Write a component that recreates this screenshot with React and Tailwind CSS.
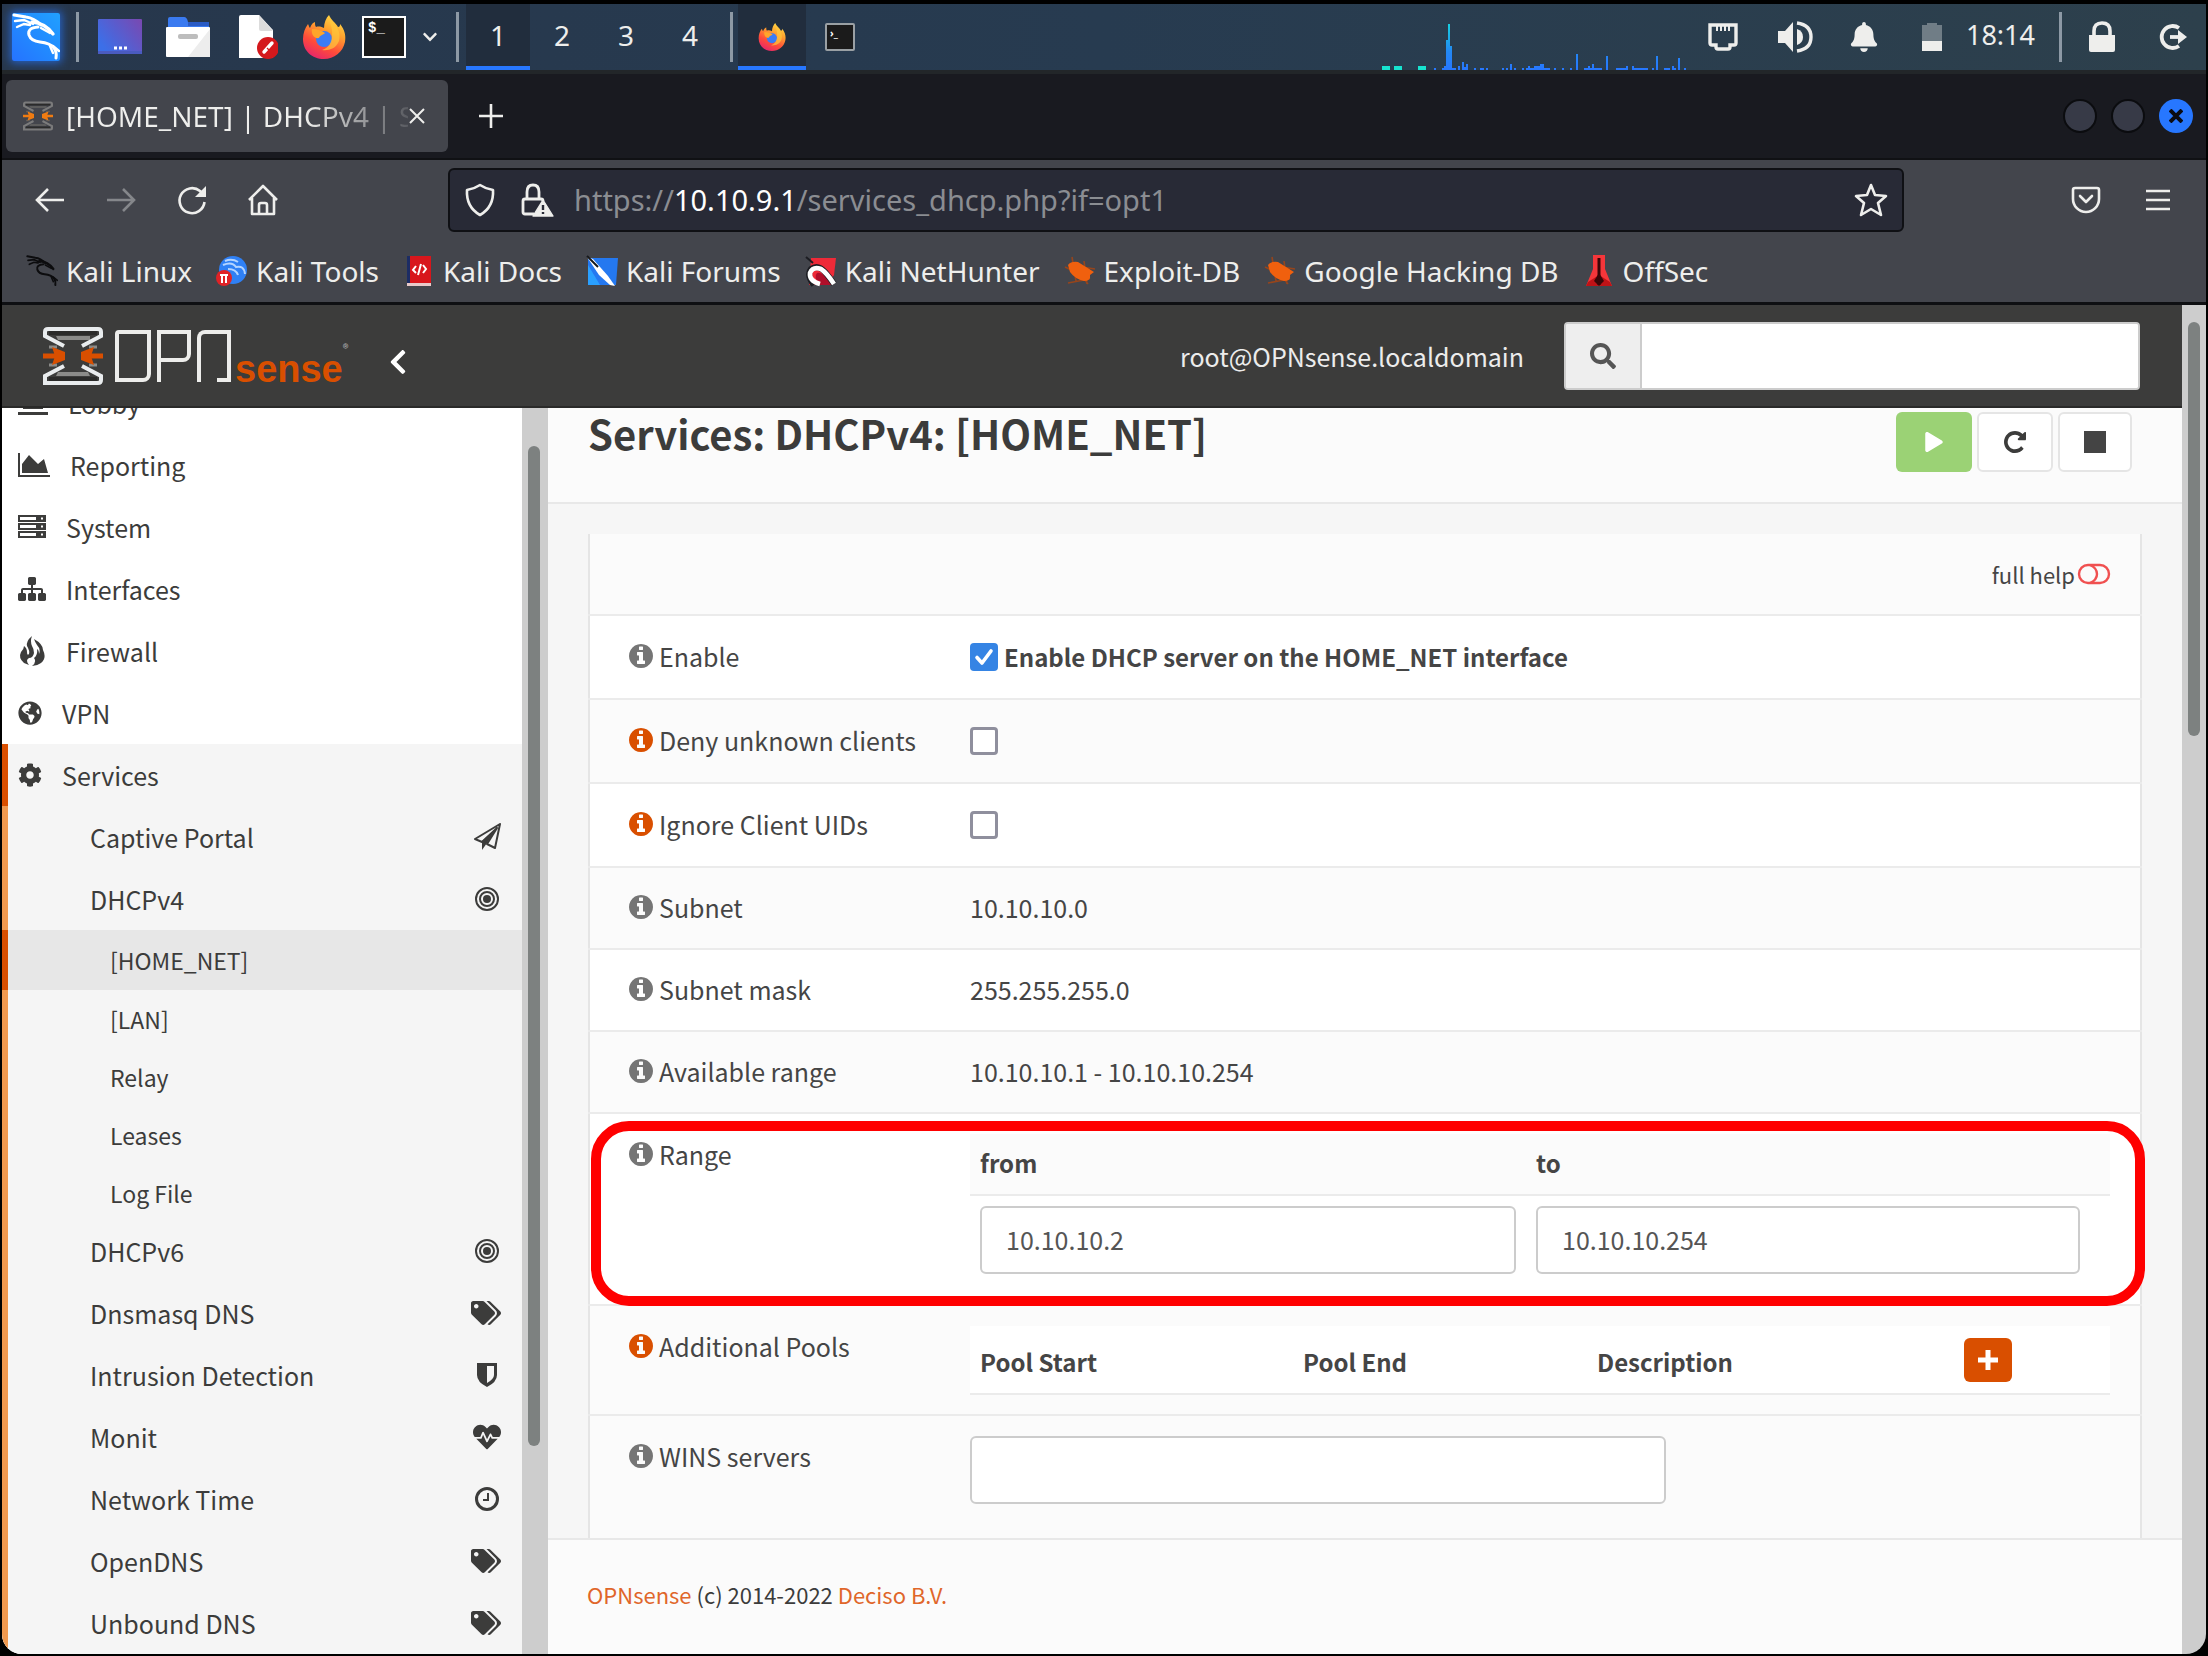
import React from "react";
import {
  FaSearch,
  FaTags,
  FaHeartbeat,
  FaCog,
  FaGlobeAmericas,
  FaPlay,
  FaChevronLeft,
  FaChevronDown,
  FaBell,
} from "react-icons/fa";

/* ---------- desktop icons ---------- */

function KaliDragon({ className, color }) {
  return (
    <svg viewBox="0 0 48 48" className={className} fill="none" stroke={color} strokeLinecap="round">
      <path d="M2 2L14 4Q22 5 29 12" strokeWidth="3" />
      <path d="M3 8L12 7L21 11M5 14L12 11L18 12" strokeWidth="2.4" />
      <path d="M20 9Q33 10 41 21" strokeWidth="3.4" />
      <path d="M29 15L38 20" strokeWidth="2.4" />
      <path d="M26 14Q15 15 17 22Q19 28 28 29Q38 30 42 35Q45 39 44 45" strokeWidth="3" />
      <path d="M38 33L41 40M41 33L47 38" strokeWidth="2.4" />
    </svg>
  );
}

function FirefoxIcon({ className, id }) {
  return (
    <svg viewBox="0 0 44 44" className={className}>
      <defs>
        <linearGradient id={id} x1="0.8" y1="0" x2="0.3" y2="1">
          <stop offset="0" stopColor="#ffe14a" />
          <stop offset="0.35" stopColor="#ffa22e" />
          <stop offset="0.7" stopColor="#ff4b3a" />
          <stop offset="1" stopColor="#e6266b" />
        </linearGradient>
      </defs>
      <path
        d="M27 0C29 5 34 8 36 12C38 12 38 10 38 9C43 15 44 21 43 27C41 37 32 44 22 44C10 44 1 36 1 24C1 18 3 13 6 9C7 11 7 12 8 13C9 9 12 7 13 7C13 9 13 11 14 12C17 11 20 12 22 13C22 8 24 3 27 0Z"
        fill={`url(#${id})`}
      />
      <circle cx="22" cy="24" r="8" fill="#3b7cf5" />
      <path d="M10 14C16 14 20 16 23 18C21 20 18 20 17 23C12 24 9 19 10 14Z" fill="#ffa52a" />
      <path d="M30 20C31 12 27 8 27 2C31 8 40 14 37 26C34 34 26 36 20 35C27 33 30 27 30 20Z" fill="#ffc83c" opacity="0.7" />
    </svg>
  );
}

function DesktopIcon() {
  return (
    <svg viewBox="0 0 44 36" className="h-9 w-11">
      <defs>
        <linearGradient id="desk" x1="0" y1="0.6" x2="1" y2="0">
          <stop offset="0" stopColor="#3c6fe8" />
          <stop offset="1" stopColor="#7a48b0" />
        </linearGradient>
      </defs>
      <rect width="44" height="35" rx="1" fill="url(#desk)" />
      <rect y="32" width="44" height="3" fill="#4a5bc0" />
      <path d="M16 29h3M21 29h3M26 29h3" stroke="#fff" strokeWidth="3" />
    </svg>
  );
}

function FolderIcon() {
  return (
    <svg viewBox="0 0 44 42" className="h-[42px] w-11">
      <path d="M2 3Q2 1 4 1H18Q21 1 22 6H43V16H2Z" fill="#3a7af0" />
      <path d="M22 6H43V10H22Z" fill="#2a5bc4" />
      <rect y="11" width="44" height="30" rx="1" fill="#fff" />
      <path d="M44 13V41H22Z" fill="#ededed" />
      <rect x="12" y="18" width="20" height="5" rx="2" fill="#bdbdbd" />
    </svg>
  );
}

function DocumentIcon() {
  return (
    <svg viewBox="0 0 44 46" className="h-[46px] w-11">
      <path d="M5 3Q5 1 7 1H25L39 16V44H5Z" fill="#fff" />
      <path d="M25 1L39 17H27Q25 17 25 15Z" fill="#dcdcdc" />
      <circle cx="34" cy="34" r="11" fill="#d4181c" />
      <path d="M30 38L38 29" stroke="#fff" strokeWidth="3.4" strokeLinecap="round" />
      <path d="M33 34L35 36" stroke="#d4181c" strokeWidth="1.2" />
    </svg>
  );
}

function Separator({ className }) {
  return <span className={`h-[50px] w-[3px] bg-[#8d99a5] ${className}`} />;
}

const LOAD_BARS = [
  [54, 2], [62, 2], [64, 4], [66, 30], [68, 46], [70, 24], [72, 2], [74, 2], [78, 4], [82, 8], [84, 3], [86, 6],
  [94, 2], [100, 2], [102, 2], [106, 2], [122, 2], [126, 2], [130, 6], [134, 2], [142, 2], [146, 2], [148, 4],
  [150, 2], [152, 2], [154, 4], [156, 4], [158, 4], [160, 6], [162, 6], [164, 2], [166, 2], [168, 2], [174, 2],
  [182, 2], [190, 2], [196, 16], [204, 2], [206, 2], [208, 4], [210, 2], [212, 6], [214, 2], [216, 2], [218, 2],
  [220, 2], [226, 14], [236, 2], [238, 2], [240, 2], [242, 2], [244, 2], [246, 4], [252, 4], [254, 2], [256, 2],
  [258, 2], [260, 2], [262, 2], [264, 2], [266, 2], [272, 2], [276, 14], [284, 2], [286, 2], [288, 2], [292, 4],
  [294, 2], [298, 12], [304, 2],
];

function LoadGraph() {
  return (
    <svg viewBox="0 0 308 66" className="h-[66px] w-[308px]">
      <defs>
        <linearGradient id="load" x1="0" y1="20" x2="0" y2="66" gradientUnits="userSpaceOnUse">
          <stop offset="0" stopColor="#16d0e0" />
          <stop offset="0.6" stopColor="#2388f4" />
          <stop offset="1" stopColor="#2777ff" />
        </linearGradient>
      </defs>
      <path d="M2 64h8M14 64h8M38 64h8" stroke="#17e3d0" strokeWidth="4" />
      {LOAD_BARS.map(([x, h]) => (
        <rect key={x} x={x} y={66 - h} width="2" height={h} fill="url(#load)" />
      ))}
    </svg>
  );
}

function Taskbar() {
  return (
    <header className="flex h-[66px] shrink-0 items-center bg-linear-to-r from-[#27374c] via-[#273b50] to-[#2d404c] pr-[18px] pl-[10px] text-[28px] text-[#eeeeec]">
      <button aria-label="Applications" className="h-12 w-12 rounded-xs bg-linear-to-tr from-[#2673ff] to-[#21a0ff] shadow-[0_0_8px_2px_#2777ffaa]">
        <KaliDragon className="h-12 w-12" color="#fff" />
      </button>
      <Separator className="ml-4" />
      <div className="ml-[19px] flex items-center gap-6">
        <button aria-label="Show desktop"><DesktopIcon /></button>
        <button aria-label="Files"><FolderIcon /></button>
        <button aria-label="Text editor"><DocumentIcon /></button>
        <button aria-label="Firefox"><FirefoxIcon className="h-11 w-11" id="ffa" /></button>
      </div>
      <button aria-label="Terminal" className="ml-4 flex h-[42px] w-11 items-start border-2 border-white bg-[#1b1b1b] pl-1 font-['Liberation_Mono'] text-sm font-bold text-white">
        $_
      </button>
      <button aria-label="More launchers" className="ml-4"><FaChevronDown className="h-4 w-4" /></button>
      <Separator className="ml-[18px]" />
      <nav className="ml-[7px] flex h-full">
        <button className="w-16 border-b-4 border-[#2777ff] bg-[#212d3d]">1</button>
        <button className="w-16 pb-1">2</button>
        <button className="w-16 pb-1">3</button>
        <button className="w-16 pb-1">4</button>
      </nav>
      <Separator className="ml-2" />
      <button aria-label="Firefox window" className="ml-[5px] flex h-full w-[68px] items-center justify-center border-b-4 border-[#2777ff] bg-[#212d3d] pt-1">
        <FirefoxIcon className="h-7 w-7" id="ffb" />
      </button>
      <button aria-label="Terminal window" className="flex h-full w-[68px] items-center justify-center">
        <span className="flex h-7 w-[30px] items-start rounded-xs border-2 border-[#9aa0a4] bg-[#1b1b1b] pl-[3px] text-[10px] leading-4 font-bold text-white">›_</span>
      </button>
      <div className="ml-auto flex items-center">
        <LoadGraph />
        <svg viewBox="0 0 30 28" className="ml-5 h-7 w-[30px]" fill="none" stroke="#eeeeec" strokeWidth="3.4">
          <path d="M2 2H28V20Q28 22 26 22H22V24Q22 26 20 26H10Q8 26 8 24V22H4Q2 22 2 20Z" />
          <path d="M9 3V8M13 3V8M17 3V8M21 3V8" strokeWidth="2" />
        </svg>
        <svg viewBox="0 0 36 32" className="ml-10 h-8 w-9" fill="#eeeeec">
          <path d="M0 10H7L15 1V31L7 22H0Z" />
          <path d="M19 8Q25 10 25 16T19 24Z" />
          <path d="M19 2Q33 4 33 16T19 30" fill="none" stroke="#eeeeec" strokeWidth="3.4" />
        </svg>
        <FaBell className="ml-9 h-[30px] w-7" />
        <svg viewBox="0 0 20 28" className="ml-11 h-7 w-5">
          <path d="M0 2H5V0H15V2H20V28H0Z" fill="#707d86" />
          <path d="M0 18H20V28H0Z" fill="#eeeeec" />
        </svg>
        <time className="ml-6 pb-1 text-[27px]">18:14</time>
        <Separator className="ml-6" />
        <svg viewBox="0 0 28 32" className="ml-[26px] h-8 w-7" fill="#eeeeec">
          <path d="M1 14H27V29Q27 31 25 31H3Q1 31 1 29Z" />
          <path d="M6 15V10Q6 2 14 2T22 10V15" fill="none" stroke="#eeeeec" strokeWidth="3.6" />
        </svg>
        <svg viewBox="0 0 30 28" className="ml-[42px] h-7 w-[30px]" fill="none" stroke="#eeeeec" strokeWidth="3.8">
          <path d="M21 5A11 11 0 1 0 21 23" />
          <path d="M12 14H22" />
          <path d="M20 7L29 14L20 21Z" fill="#eeeeec" stroke="none" />
        </svg>
      </div>
    </header>
  );
}

/* ---------- browser chrome ---------- */

function HourglassMark({ className, line, inner, accent }) {
  return (
    <svg viewBox="0 0 60 60" className={className} fill="none">
      <path d="M6 5H54V9H6ZM6 51H54V55H6Z" fill="#2b2b2a" />
      <path d="M13 10H47V14H15ZM15 46H45L47 50H13Z" fill={inner} />
      <path d="M6 21H14M46 21H54M6 39H14M46 39H54" stroke={inner} strokeWidth="3" />
      <path d="M21 20L2 10V6Q2 3 5 3H55Q58 3 58 6V10L39 20" stroke={line} strokeWidth="4" />
      <path d="M21 40L2 50V57H55Q58 57 58 54V50L39 40" stroke={line} strokeWidth="4" />
      <path d="M0 30H14M60 30H46" stroke={accent} strokeWidth="5" />
      <path d="M9 21L22 26V34L9 39L12 30ZM51 21L38 26V34L51 39L48 30Z" fill={accent} />
    </svg>
  );
}

function TabStrip() {
  return (
    <div className="flex h-[90px] shrink-0 items-center border-t-4 border-b-2 border-t-[#222629] border-b-[#101114] bg-[#191a20] pr-[13px] pl-1 text-[#eeeeec]">
      <div className="flex h-[72px] w-[442px] items-center rounded-md bg-[#43454c] pl-[17px]">
        <HourglassMark className="h-8 w-[30px]" line="#7b7b7b" inner="#5c5c5c" accent="#f07c12" />
        <span className="ml-[13px] w-[342px] overflow-hidden bg-linear-to-r from-[#eeeeec] from-70% to-[#eeeeec22] bg-clip-text text-[28px] whitespace-nowrap text-transparent">
          [HOME_NET] | DHCPv4 | S
        </span>
        <button aria-label="Close tab">
          <svg viewBox="0 0 18 18" className="h-[18px] w-[18px]" stroke="#eeeeec" strokeWidth="2">
            <path d="M2 2L16 16M16 2L2 16" />
          </svg>
        </button>
      </div>
      <button aria-label="New tab" className="ml-[30px]">
        <svg viewBox="0 0 26 26" className="h-[26px] w-[26px]" stroke="#eeeeec" strokeWidth="2.6">
          <path d="M13 1V25M1 13H25" />
        </svg>
      </button>
      <div className="ml-auto flex gap-[14px]">
        <button aria-label="Minimize" className="h-[34px] w-[34px] rounded-full border-2 border-[#0b0c0f] bg-[#373a47]" />
        <button aria-label="Maximize" className="h-[34px] w-[34px] rounded-full border-2 border-[#0b0c0f] bg-[#373a47]" />
        <button aria-label="Close" className="flex h-[34px] w-[34px] items-center justify-center rounded-full bg-[#2777ff]">
          <svg viewBox="0 0 14 14" className="h-[14px] w-[14px]" stroke="#0b0c14" strokeWidth="4">
            <path d="M1 1L13 13M13 1L1 13" />
          </svg>
        </button>
      </div>
    </div>
  );
}

function NavBar() {
  return (
    <div className="flex h-20 shrink-0 items-center bg-[#43454c] pr-[35px] pl-8 text-[#eeeeec]">
      <div className="flex items-center gap-[39px]">
        <button aria-label="Back">
          <svg viewBox="0 0 32 32" className="h-8 w-8" fill="none" stroke="#eeeeec" strokeWidth="2.6">
            <path d="M30 16H3M14 5L3 16L14 27" />
          </svg>
        </button>
        <button aria-label="Forward">
          <svg viewBox="0 0 32 32" className="h-8 w-8" fill="none" stroke="#85878b" strokeWidth="2.6">
            <path d="M2 16H29M18 5L29 16L18 27" />
          </svg>
        </button>
        <button aria-label="Reload">
          <svg viewBox="0 0 32 32" className="h-8 w-8" fill="none" stroke="#eeeeec" strokeWidth="2.6">
            <path d="M28.500 18A12.500 12.500 0 1 1 24 7L28 11" />
            <path d="M30 2V13H19Z" fill="#eeeeec" stroke="none" />
          </svg>
        </button>
        <button aria-label="Home">
          <svg viewBox="0 0 32 32" className="h-8 w-8" fill="none" stroke="#eeeeec" strokeWidth="2.6" strokeLinejoin="round">
            <path d="M2 16L16 2L30 16M5 14V30H27V14M12 30V21Q12 19 14 19H18Q20 19 20 21V30" />
          </svg>
        </button>
      </div>
      <div className="mr-auto ml-[169px] flex h-16 max-w-[1456px] min-w-0 flex-1 items-center rounded-md border-2 border-[#0f1014] bg-[#282a36] px-[14px]">
        <svg viewBox="0 0 32 34" className="h-[34px] w-8" fill="none" stroke="#eeeeec" strokeWidth="2.6" strokeLinejoin="round">
          <path d="M16 2Q22 6 29 7Q30 24 16 32Q2 24 3 7Q10 6 16 2Z" />
        </svg>
        <svg viewBox="0 0 34 34" className="ml-6 h-[34px] w-[34px]" fill="none" stroke="#eeeeec" strokeWidth="2.8">
          <path d="M14 31H5Q3 31 3 29V18Q3 16 5 16H21Q23 16 23 18M7 16V9Q7 2 13 2T19 9V16" />
          <path d="M23 17L33 33H13Z" fill="#eeeeec" stroke="#eeeeec" strokeWidth="1.4" strokeLinejoin="round" />
          <path d="M23 22V27M23 29V31" stroke="#282a36" strokeWidth="2.4" />
        </svg>
        <p className="ml-5 text-[29px] whitespace-nowrap text-[#8b8d92]">
          https://<span className="text-white">10.10.9.1</span>/services_dhcp.php?if=opt1
        </p>
        <button aria-label="Bookmark this page" className="ml-auto">
          <svg viewBox="0 0 34 34" className="h-[34px] w-[34px]" fill="none" stroke="#eeeeec" strokeWidth="2.6" strokeLinejoin="round">
            <path d="M17 2L21 12L32 13L24 20L27 32L17 26L7 32L10 20L2 13L13 12Z" />
          </svg>
        </button>
      </div>
      <button aria-label="Save to Pocket" className="ml-8">
        <svg viewBox="0 0 30 28" className="h-7 w-[30px]" fill="none" stroke="#eeeeec" strokeWidth="2.6" strokeLinecap="round" strokeLinejoin="round">
          <path d="M4 2H26Q28 2 28 4V13A13 13 0 0 1 2 13V4Q2 2 4 2Z" />
          <path d="M9 10L15 16L21 10" />
        </svg>
      </button>
      <button aria-label="Menu" className="ml-11">
        <svg viewBox="0 0 26 22" className="h-[22px] w-[26px]" stroke="#eeeeec" strokeWidth="2.6">
          <path d="M1 2H25M1 11H25M1 20H25" />
        </svg>
      </button>
    </div>
  );
}

function BugIcon() {
  return (
    <svg viewBox="0 0 32 32" className="h-8 w-8">
      <path d="M1 12L26 24M4 28L20 25M8 2L12 26M20 6L23 29M31 14L18 12M24 29L14 16" stroke="#96451c" strokeWidth="1.6" />
      <path d="M4 10Q7 6 14 7L22 12L30 17L26 20Q27 26 20 26Q11 24 6 17Z" fill="#f0600e" />
    </svg>
  );
}

const BOOKMARKS = [
  { label: "Kali Linux", icon: <KaliDragon className="h-8 w-8" color="#0c0c0e" /> },
  {
    label: "Kali Tools",
    icon: (
      <svg viewBox="0 0 32 32" className="h-8 w-8">
        <circle cx="17" cy="15" r="14" fill="#2f80f5" />
        <path d="M7 10Q16 6 20 12Q28 10 29 19M12 14Q20 14 22 20M9 6Q16 3 22 7" fill="none" stroke="#b4d4ff" strokeWidth="2" />
        <circle cx="8" cy="23" r="8" fill="#e02226" />
        <path d="M4 20H12M6 20V28M10 20V28" stroke="#fff" strokeWidth="2" />
      </svg>
    ),
  },
  {
    label: "Kali Docs",
    icon: (
      <svg viewBox="0 0 32 32" className="h-8 w-8">
        <path d="M4 1H28V28H4Z" fill="#d8161c" />
        <path d="M4 1H7V28H4Z" fill="#1c2c64" />
        <path d="M4 28H28V31H4Z" fill="#e8c9c9" />
        <path d="M13 11L10 15L13 18M20 10L23 14L20 18M18 9L15 20" fill="none" stroke="#fff" strokeWidth="2" />
      </svg>
    ),
  },
  {
    label: "Kali Forums",
    icon: (
      <svg viewBox="0 0 32 32" className="h-8 w-8">
        <path d="M2 3H32L30 30H2Z" fill="#2478f0" />
        <path d="M2 10L14 30H2Z" fill="#2aa0ff" />
        <path d="M1 2L7 4L22 21L29 31L24 30L13 20Z" fill="#fff" />
        <path d="M1 1L12 12" stroke="#16181c" strokeWidth="2" />
      </svg>
    ),
  },
  {
    label: "Kali NetHunter",
    icon: (
      <svg viewBox="0 0 32 32" className="h-8 w-8">
        <path d="M6 3H31L29 20L22 30H4Z" fill="#ee2a38" />
        <path d="M15 30Q8 22 12 18Q18 16 28 30" fill="#b00f2a" />
        <path d="M9 30Q1 20 6 14Q13 9 20 17Q25 23 29 29" fill="none" stroke="#1c1d22" strokeWidth="6" />
        <path d="M15 29Q4 26 5 18Q8 11 16 14Q22 18 29 29" fill="none" stroke="#fff" strokeWidth="4.600" />
        <path d="M1 2L8 8" stroke="#1c1d22" strokeWidth="2" />
      </svg>
    ),
  },
  { label: "Exploit-DB", icon: <BugIcon /> },
  { label: "Google Hacking DB", icon: <BugIcon /> },
  {
    label: "OffSec",
    icon: (
      <svg viewBox="0 0 32 32" className="h-8 w-8">
        <path d="M10 0H22V14L29 31H3L10 14Z" fill="#f5363a" />
        <path d="M5 27L16 20L27 27L29 31H3Z" fill="#c01216" />
        <path d="M16 3V30" stroke="#3a0608" strokeWidth="3" />
        <path d="M16 18L21 26L16 31L11 26Z" fill="#3a0608" />
      </svg>
    ),
  },
];

function BookmarksBar() {
  return (
    <nav className="flex h-[65px] shrink-0 items-center gap-6 border-b-[3px] border-[#0e0f12] bg-[#43454c] pl-6 text-[28px] text-[#eeeeec]">
      {BOOKMARKS.map((b) => (
        <a key={b.label} href="#" className="flex items-center gap-2 whitespace-nowrap">
          {b.icon}
          {b.label}
        </a>
      ))}
    </nav>
  );
}

/* ---------- OPNsense page ---------- */

function OpnLogo() {
  return (
    <a href="#" aria-label="OPNsense" className="flex items-end">
      <HourglassMark className="h-[60px] w-[60px]" line="#e9ecee" inner="#8b8b89" accent="#d94f00" />
      <span className="mb-1 ml-3 h-[52px] w-9 rounded-tl-sm rounded-br-lg border-4 border-[#ededeb]" />
      <span className="mb-1 ml-[6px] flex h-[52px] w-[34px] border-l-4 border-[#ededeb]">
        <span className="-ml-1 h-8 w-[34px] rounded-tl-sm rounded-br-lg border-4 border-[#ededeb]" />
      </span>
      <span className="mb-1 ml-[6px] flex h-[52px] w-[34px] items-end justify-end rounded-tl-lg border-4 border-b-0 border-[#ededeb]">
        <span className="h-1 w-[10px] bg-[#ededeb]" />
      </span>
      <span className="ml-1 font-['Liberation_Sans'] text-[38px] leading-[34px] font-bold text-[#d94f00]">sense</span>
      <span className="mb-[30px] text-[12px] leading-4 text-[#b0b0b0]">®</span>
    </a>
  );
}

function PageHeader() {
  return (
    <div className="flex h-[103px] shrink-0 items-center border-b-2 border-[#2a2a29] bg-[#3c3c3b] pr-[42px] pl-[41px]">
      <OpnLogo />
      <button aria-label="Collapse menu" className="ml-10 pt-3">
        <FaChevronLeft className="h-7 w-5 text-white" />
      </button>
      <span className="ml-auto text-[25px] leading-10 text-[#ececec]">root@OPNsense.localdomain</span>
      <form className="ml-10 flex h-[68px] w-[576px] overflow-hidden rounded-sm border-2 border-[#cccccc] bg-white">
        <label htmlFor="menu-search" className="flex w-[76px] shrink-0 items-center justify-center border-r-2 border-[#cccccc] bg-[#eeeeee]">
          <FaSearch className="h-[26px] w-[26px] text-[#555555]" />
          <span className="sr-only">Search menu</span>
        </label>
        <input id="menu-search" type="text" className="min-w-0 flex-1 bg-white px-4 text-[25px] outline-none" />
      </form>
    </div>
  );
}

function LaptopIcon() {
  return (
    <svg viewBox="0 0 30 28" className="h-7 w-[30px]" fill="currentColor">
      <path d="M5 4H25V20H5ZM0 23H30V26H0Z" />
    </svg>
  );
}

function AreaChartIcon() {
  return (
    <svg viewBox="0 0 2048 1792" className="h-7 w-8" fill="currentColor">
      <path d="M2048 1536v128h-2048v-1536h128v1408h1920zM1664 512l256 896h-1664v-576l448-576 576 576z" />
    </svg>
  );
}

function ServerIcon() {
  return (
    <svg viewBox="0 0 28 24" className="h-6 w-7" fill="none" stroke="currentColor" strokeWidth="2">
      <path d="M1 1H27V6H1ZM1 9H27V14H1ZM1 17H27V22H1Z" />
      <path d="M18 3.500H27M18 11.500H27M18 19.500H27" strokeWidth="4" />
      <path d="M23 3.500h2M23 11.500h2M23 19.500h2" stroke="#fff" strokeWidth="2" />
    </svg>
  );
}

function SitemapIcon() {
  return (
    <svg viewBox="0 0 1792 1792" className="h-7 w-7" fill="currentColor">
      <path d="M1792 1248v320q0 40-28 68t-68 28h-320q-40 0-68-28t-28-68v-320q0-40 28-68t68-28h96v-192h-512v192h96q40 0 68 28t28 68v320q0 40-28 68t-68 28h-320q-40 0-68-28t-28-68v-320q0-40 28-68t68-28h96v-192h-512v192h96q40 0 68 28t28 68v320q0 40-28 68t-68 28h-320q-40 0-68-28t-28-68v-320q0-40 28-68t68-28h96v-192q0-52 38-90t90-38h512v-192h-96q-40 0-68-28t-28-68v-320q0-40 28-68t68-28h320q40 0 68 28t28 68v320q0 40-28 68t-68 28h-96v192h512q52 0 90 38t38 90v192h96q40 0 68 28t28 68z" />
    </svg>
  );
}

function FireIcon() {
  return (
    <svg viewBox="0 0 28 30" className="h-[30px] w-7" fill="currentColor">
      <path d="M14 0Q8 5 9 10Q12 15 11 18Q9 20 9 16Q9 12 6 10Q6 13 3 16Q0 22 6 27L11 29Q7 24 11 22Q15 22 16 17Q16 13 14 10Q12 5 14 0Z" />
      <path d="M16 3Q25 8 25 14Q29 22 23 27Q19 30 14 30Q19 26 16 22Q20 19 19 13Q21 14 21 18Q23 13 19 9Q17 6 16 3Z" />
    </svg>
  );
}

function PlaneIcon() {
  return (
    <svg viewBox="0 0 28 28" className="h-7 w-7" fill="none" stroke="currentColor" strokeWidth="2" strokeLinejoin="round">
      <path d="M27 1L2 16L9 19L24 5L14 21L22 25Z" />
      <path d="M9 18L24 5L14 20L9 27Z" fill="currentColor" stroke="none" />
    </svg>
  );
}

function BullseyeIcon() {
  return (
    <svg viewBox="0 0 28 28" className="h-7 w-7" fill="none" stroke="currentColor" strokeWidth="2">
      <circle cx="14" cy="14" r="11" />
      <circle cx="14" cy="14" r="7" />
      <circle cx="14" cy="14" r="4" fill="currentColor" stroke="none" />
    </svg>
  );
}

function ShieldIcon() {
  return (
    <svg viewBox="0 0 28 28" className="h-7 w-7" fill="currentColor">
      <path d="M4 2H24V14Q24 21 14 26Q4 21 4 14ZM14 5V22Q21 18 21 14V5Z" fillRule="evenodd" />
    </svg>
  );
}

function ClockIcon() {
  return (
    <svg viewBox="0 0 28 28" className="h-7 w-7" fill="none" stroke="currentColor" strokeWidth="3">
      <circle cx="14" cy="14" r="10.500" />
      <path d="M15 8V15H10" strokeWidth="2" />
    </svg>
  );
}

function InfoIcon({ className }) {
  return (
    <svg viewBox="128 128 1536 1536" className={className} fill="currentColor">
      <path d="M1152 1376v-160q0-14-9-23t-23-9h-96v-512q0-14-9-23t-23-9h-320q-14 0-23 9t-9 23v160q0 14 9 23t23 9h96v320h-96q-14 0-23 9t-9 23v160q0 14 9 23t23 9h448q14 0 23-9t9-23zm-128-896v-160q0-14-9-23t-23-9h-192q-14 0-23 9t-9 23v160q0 14 9 23t23 9h192q14 0 23-9t9-23zm640 416q0 209-103 385.500t-279.500 279.500-385.500 103-385.500-103-279.500-279.500-103-385.500 103-385.500 279.500-279.500 385.500-103 385.500 103 279.500 279.500 103 385.500z" />
    </svg>
  );
}

function RepeatIcon({ className }) {
  return (
    <svg viewBox="128 128 1536 1536" className={className} fill="currentColor">
      <path d="M1664 256v448q0 26-19 45t-45 19h-448q-42 0-59-40-17-39 14-69l138-138q-148-137-349-137-104 0-198.500 40.500t-163.500 109.500-109.500 163.500-40.500 198.500 40.500 198.500 109.500 163.500 163.500 109.500 198.500 40.500q119 0 225-52t179-147q7-10 23-12 15 0 25 9l137 138q9 8 9.500 20.500t-7.500 22.500q-109 132-264 204.500t-327 72.500q-156 0-298-61t-245-164-164-245-61-298 61-298 164-245 245-164 298-61q147 0 284.500 55.500t244.500 156.500l130-129q29-31 70-14 39 17 39 59z" />
    </svg>
  );
}

const TOP_ITEMS = [
  { label: "Lobby", icon: <LaptopIcon /> },
  { label: "Reporting", icon: <AreaChartIcon /> },
  { label: "System", icon: <ServerIcon /> },
  { label: "Interfaces", icon: <SitemapIcon /> },
  { label: "Firewall", icon: <FireIcon /> },
  { label: "VPN", icon: <FaGlobeAmericas className="h-6 w-6" /> },
];

const tags = <FaTags className="h-7 w-[30px]" />;
const SERVICE_ITEMS = [
  { label: "Captive Portal", icon: <PlaneIcon /> },
  { label: "DHCPv4", icon: <BullseyeIcon />, children: ["[HOME_NET]", "[LAN]", "Relay", "Leases", "Log File"] },
  { label: "DHCPv6", icon: <BullseyeIcon /> },
  { label: "Dnsmasq DNS", icon: tags },
  { label: "Intrusion Detection", icon: <ShieldIcon /> },
  { label: "Monit", icon: <FaHeartbeat className="h-7 w-7" /> },
  { label: "Network Time", icon: <ClockIcon /> },
  { label: "OpenDNS", icon: tags },
  { label: "Unbound DNS", icon: tags },
];

function Sidebar() {
  return (
    <aside className="flex w-[546px] shrink-0 overflow-hidden bg-white">
      <nav className="-mt-9 flex-1 text-[25px] leading-10 text-[#3c3c3b]">
        {TOP_ITEMS.map((i) => (
          <a key={i.label} href="#" className="flex h-[62px] items-center gap-5 pl-4">
            {i.icon}
            {i.label}
          </a>
        ))}
        <div className="bg-[#f5f5f5]">
          <a href="#" className="flex h-[62px] items-center gap-5 border-l-[6px] border-[#d94f00] pl-[10px]">
            <FaCog className="h-6 w-6" />
            Services
          </a>
          {SERVICE_ITEMS.map((s) => (
            <div key={s.label}>
              <a href="#" className="flex h-[62px] items-center justify-between border-l-[6px] border-[#f0994f] pr-[21px] pl-[82px]">
                {s.label}
                {s.icon}
              </a>
              {s.children && (
                <div className="h-[290px]">
                  {s.children.map((c, n) => (
                    <a
                      key={c}
                      href="#"
                      className={
                        n === 0
                          ? "flex h-[60px] items-center border-l-[6px] border-[#d94f00] bg-[#e7e7e7] pl-[102px] text-[23px]"
                          : "flex h-[58px] items-center border-l-[6px] border-[#f0994f] pl-[102px] text-[23px]"
                      }
                    >
                      {c}
                    </a>
                  ))}
                </div>
              )}
            </div>
          ))}
        </div>
      </nav>
      <div className="w-[26px] bg-[#cdcdcd] pt-[38px]">
        <div className="ml-[6px] h-[1000px] w-3 rounded-full bg-[#7d8180]" />
      </div>
    </aside>
  );
}

function RowLabel({ help, htmlFor, children }) {
  const Tag = htmlFor ? "label" : "span";
  return (
    <Tag htmlFor={htmlFor} className="flex items-center gap-[6px]">
      <InfoIcon className={help ? "h-6 w-6 text-[#d94f00]" : "h-6 w-6 text-[#757575]"} />
      {children}
    </Tag>
  );
}

function FormRow({ label, help, htmlFor, tone, size, children }) {
  return (
    <tr className={`border-b-2 border-[#ebebeb] ${tone} ${size}`}>
      <td className="pb-[3px] pl-[39px]">
        <RowLabel help={help} htmlFor={htmlFor}>{label}</RowLabel>
      </td>
      <td className="pr-[30px] pl-[39px]">{children}</td>
    </tr>
  );
}

function Value({ children }) {
  return <span className="block pb-[3px]">{children}</span>;
}

const boxClass =
  "block h-7 w-7 shrink-0 appearance-none rounded-sm border-[3px] border-[#8f8f9d] bg-white";
const fieldClass =
  "block h-[68px] w-full rounded-md border-2 border-[#cccccc] bg-white px-6 pb-[2px] text-[25px] text-[#555555] outline-none";

function DhcpForm() {
  return (
    <table className="w-full table-fixed border-collapse border-x-2 border-[#e5e5e5] text-left text-[25px] leading-10 text-[#454545]">
      <colgroup>
        <col className="w-[342px]" />
        <col />
      </colgroup>
      <tbody>
        <tr className="h-[81px] border-b-2 border-[#ebebeb] bg-[#fbfbfb]">
          <td colSpan={2} className="pr-[29px]">
            <button className="ml-auto flex items-center gap-[2px] text-[22px]">
              full help
              <svg viewBox="0 0 34 24" className="h-6 w-[34px]" fill="none" stroke="#f05050" strokeWidth="2.400">
                <rect x="2" y="3" width="30" height="18" rx="9" />
                <path d="M13 3Q20 6 20 12T13 21" />
              </svg>
            </button>
          </td>
        </tr>
        <FormRow label="Enable" htmlFor="enable" tone="bg-white" size="h-[84px]">
          <label className="flex items-center gap-[6px] text-[24px] font-bold">
            <span className="relative flex">
              <input id="enable" type="checkbox" defaultChecked className="block h-7 w-7 appearance-none rounded-sm bg-[#3584e4]" />
              <svg viewBox="0 0 28 28" className="pointer-events-none absolute inset-0 h-7 w-7" fill="none" stroke="#fff" strokeWidth="3.600" strokeLinecap="round" strokeLinejoin="round">
                <path d="M7 14.500L12 20L21 8" />
              </svg>
            </span>
            Enable DHCP server on the HOME_NET interface
          </label>
        </FormRow>
        <FormRow label="Deny unknown clients" help htmlFor="deny" tone="bg-[#fbfbfb]" size="h-[84px]">
          <input id="deny" type="checkbox" className={boxClass} />
        </FormRow>
        <FormRow label="Ignore Client UIDs" help htmlFor="uids" tone="bg-white" size="h-[84px]">
          <input id="uids" type="checkbox" className={boxClass} />
        </FormRow>
        <FormRow label="Subnet" tone="bg-[#fbfbfb]" size="h-[82px]"><Value>10.10.10.0</Value></FormRow>
        <FormRow label="Subnet mask" tone="bg-white" size="h-[82px]"><Value>255.255.255.0</Value></FormRow>
        <FormRow label="Available range" tone="bg-[#fbfbfb]" size="h-[82px]"><Value>10.10.10.1 - 10.10.10.254</Value></FormRow>
        <tr className="relative h-48 border-b-2 border-[#ebebeb] bg-white align-top">
          <td className="pt-5 pl-[39px]">
            <RowLabel>Range</RowLabel>
            <span className="pointer-events-none absolute top-2 -right-1 -bottom-[3px] left-[2px] rounded-[38px] border-[10px] border-[#ff0000]" />
          </td>
          <td className="pt-5 pr-[30px] pl-[39px]">
            <table className="w-full table-fixed">
              <thead>
                <tr className="h-[61px] border-b-2 border-[#ebebeb] bg-[#fbfbfb]">
                  <th className="w-[556px] pb-[2px] pl-[10px] text-[24px]"><label htmlFor="range-from">from</label></th>
                  <th className="pb-[2px] pl-[10px] text-[24px]"><label htmlFor="range-to">to</label></th>
                </tr>
              </thead>
              <tbody>
                <tr>
                  <td className="px-[10px] pt-[10px]"><input id="range-from" type="text" defaultValue="10.10.10.2" className={fieldClass} /></td>
                  <td className="pt-[10px] pr-[30px] pl-[10px]"><input id="range-to" type="text" defaultValue="10.10.10.254" className={fieldClass} /></td>
                </tr>
              </tbody>
            </table>
          </td>
        </tr>
        <tr className="h-[110px] border-b-2 border-[#ebebeb] bg-[#fbfbfb] align-top">
          <td className="pt-5 pl-[39px]"><RowLabel help>Additional Pools</RowLabel></td>
          <td className="pt-5 pr-[30px] pl-[39px]">
            <table className="w-full table-fixed">
              <thead>
                <tr className="h-[68px] border-b-2 border-[#ebebeb] bg-white text-[24px]">
                  <th className="w-[323px] pt-1 pl-[10px]">Pool Start</th>
                  <th className="w-[294px] pt-1 pl-[10px]">Pool End</th>
                  <th className="w-[367px] pt-1 pl-[10px]">Description</th>
                  <th className="pl-[10px]">
                    <button aria-label="Add pool" className="flex h-11 w-12 items-center justify-center rounded-md bg-[#d94f00]">
                      <svg viewBox="0 0 20 20" className="h-5 w-5" stroke="#fff" strokeWidth="5">
                        <path d="M10 0V20M0 10H20" />
                      </svg>
                    </button>
                  </th>
                </tr>
              </thead>
            </table>
          </td>
        </tr>
        <tr className="h-40 bg-[#fbfbfb] align-top">
          <td className="pt-5 pl-[39px]"><RowLabel htmlFor="wins">WINS servers</RowLabel></td>
          <td className="pt-5 pl-[39px]">
            <input id="wins" type="text" className={`${fieldClass} max-w-[696px]`} />
          </td>
        </tr>
      </tbody>
    </table>
  );
}

function Content() {
  return (
    <main className="flex min-w-0 flex-1 flex-col bg-[#f6f6f6]">
      <div className="flex h-24 shrink-0 items-start justify-between border-b-2 border-[#e8e8e8] bg-[#fbfbfb] pr-[50px] pl-10">
        <h1 className="text-[40px] leading-[50px] font-bold text-[#3c3c3b]">Services: DHCPv4: [HOME_NET]</h1>
        <div className="mt-1 flex gap-[5px] text-[#3c3c3b]">
          <button aria-label="Start" className="flex h-[60px] w-[76px] items-center justify-center rounded-md bg-[#9bd275]">
            <FaPlay className="h-5 w-5 text-white" />
          </button>
          <button aria-label="Restart" className="flex h-[60px] w-[76px] items-center justify-center rounded-md border-2 border-[#e5e5e5] bg-white">
            <RepeatIcon className="h-[22px] w-[22px]" />
          </button>
          <button aria-label="Stop" className="flex h-[60px] w-[74px] items-center justify-center rounded-md border-2 border-[#e5e5e5] bg-white">
            <span className="h-[22px] w-[22px] bg-[#444444]" />
          </button>
        </div>
      </div>
      <div className="min-h-0 flex-1 overflow-hidden px-10 pt-[30px]">
        <DhcpForm />
      </div>
      <footer className="h-[116px] shrink-0 border-t-2 border-[#e8e8e8] bg-[#fbfbfb] px-[39px] pt-[34px] text-[22px] leading-10 text-[#3c3c3b]">
        <a href="#" className="text-[#e0662a]">OPNsense</a> (c) 2014-2022 <a href="#" className="text-[#e0662a]">Deciso B.V.</a>
      </footer>
    </main>
  );
}

export default function App() {
  return (
    <div className="flex h-screen flex-col bg-black pt-1 pr-[2px] pb-[2px] pl-[2px] font-['Noto_Sans',sans-serif]">
      <Taskbar />
      <TabStrip />
      <NavBar />
      <BookmarksBar />
      <div className="flex min-h-0 flex-1 overflow-hidden rounded-b-[20px] font-['Noto_Sans_CJK_SC',sans-serif]">
        <div className="flex min-w-0 flex-1 flex-col">
          <PageHeader />
          <div className="flex min-h-0 flex-1">
            <Sidebar />
            <Content />
          </div>
        </div>
        <div className="w-6 shrink-0 bg-[#cdcdcd] pt-[17px]">
          <div className="ml-[6px] h-[414px] w-3 rounded-full bg-[#7d8180]" />
        </div>
      </div>
    </div>
  );
}
